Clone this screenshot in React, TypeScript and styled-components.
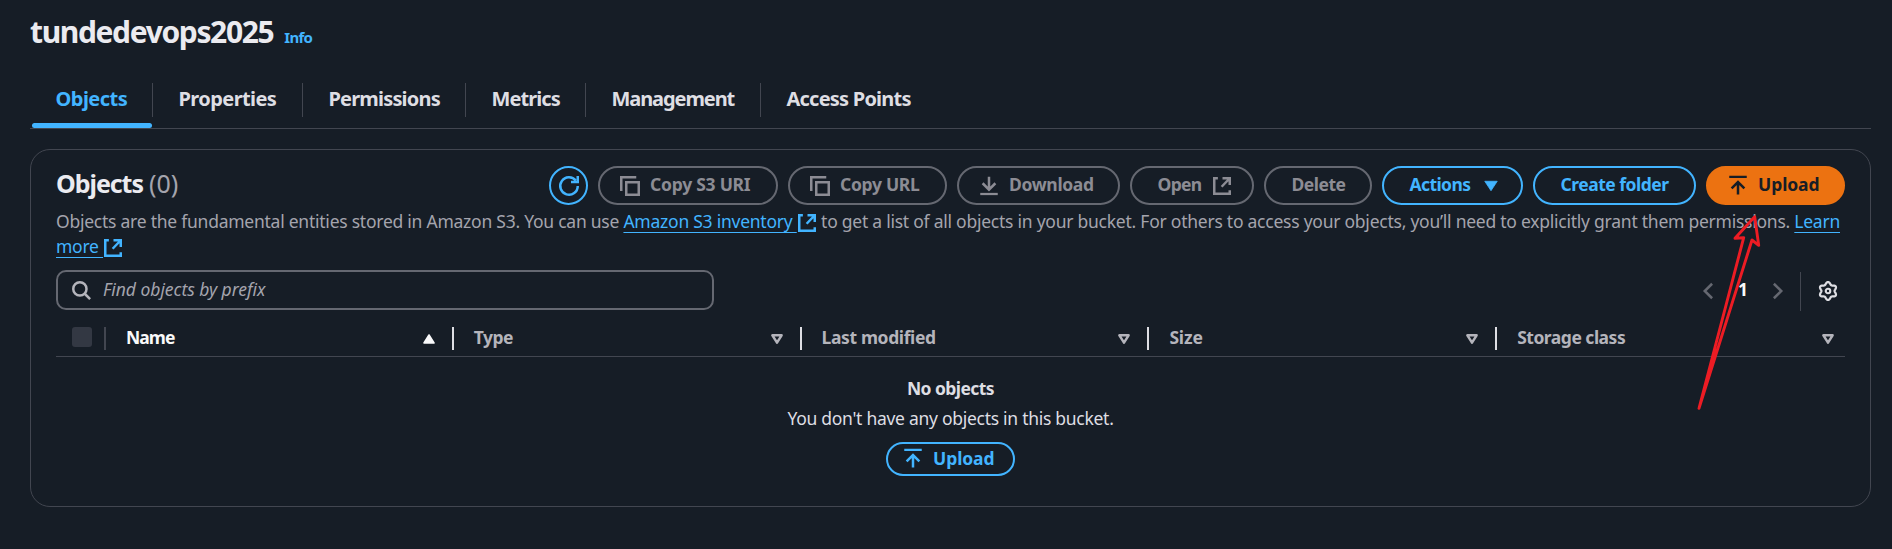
import React from 'react';
import styled, { createGlobalStyle, css } from 'styled-components';

const color = {
  page: '#161d26',
  line: '#424650',
  control: '#656871',
  disabled: '#8c8c94',
  muted: '#a4a4ad',
  column: '#b4b4bb',
  text: '#dedee3',
  heading: '#ebebf0',
  bright: '#f9f9fa',
  accent: '#42b4ff',
  primary: '#ec7211',
  onPrimary: '#161d26',
  checkbox: '#333843',
};

const GlobalStyle = createGlobalStyle`
  *, *::before, *::after { box-sizing: border-box; }
  body {
    margin: 0;
    background: ${color.page};
    color: ${color.text};
    font-family: "Noto Sans", "Open Sans", sans-serif;
    font-size: 17.5px;
    line-height: 25px;
  }
  h1, h2, p { margin: 0; }
`;

/* ---------- icons ---------- */

const IconSvg = styled.svg`
  flex: none;
  display: block;
  width: 20px;
  height: 20px;
  overflow: visible;
  fill: none;
  stroke: currentColor;
  stroke-width: 2;
`;

const lobePath = (() => {
  const pts: string[] = [];
  for (let i = 0; i < 120; i++) {
    const a = (i / 120) * Math.PI * 2;
    const r = 6.2 + 0.95 * Math.cos(6 * (a - Math.PI / 2));
    pts.push(`${(8 + r * Math.cos(a)).toFixed(2)} ${(8 - r * Math.sin(a)).toFixed(2)}`);
  }
  return `M${pts.join('L')}Z`;
})();

const icons = {
  refresh: (
    <>
      <path d="M15 8a7 7 0 1 1-1.5-4.3" />
      <path d="M9.6 4.8H15V0" />
    </>
  ),
  copy: (
    <>
      <path d="M1 12V1h12" />
      <path d="M5 5h10v10H5z" />
    </>
  ),
  download: (
    <>
      <path d="M8 .5v10.2M2.9 5.8 8 10.9l5.1-5.1" />
      <path d="M1 14.4h14" strokeWidth={1.8} />
    </>
  ),
  upload: (
    <>
      <path d="M8 14.8V4.8M2.9 9.9 8 4.8l5.1 5.1" />
      <path d="M1 .7h14" strokeWidth={1.8} />
    </>
  ),
  external: (
    <>
      <path d="M4.7 1.8H1.8v12.4h12.4v-2.9" />
      <path d="M8.4 1.8h5.8v5.4M14.2 1.8 7.7 8.6" />
    </>
  ),
  search: (
    <>
      <circle cx="7.1" cy="7.1" r="5.3" />
      <path d="m11 11 4.3 4.3" />
    </>
  ),
  prev: <path d="M11.3 2.2 5.4 8l5.9 5.8" />,
  next: <path d="M4.7 2.2 10.6 8l-5.9 5.8" />,
  settings: (
    <>
      <path d={lobePath} strokeWidth={1.8} strokeLinejoin="round" />
      <circle cx="8" cy="8" r="1.8" strokeWidth={1.7} />
    </>
  ),
  caret: <path d="M3 4.2h10l-5 7.6z" fill="currentColor" strokeWidth={0.6} strokeLinejoin="round" />,
};

type IconName = keyof typeof icons;

const Icon = ({ name, className }: { name: IconName; className?: string }) => (
  <IconSvg className={className} viewBox="0 0 16 16" aria-hidden="true">
    {icons[name]}
  </IconSvg>
);

/* ---------- page header and tabs ---------- */

const Page = styled.main`
  position: relative;
  height: 549px;
  padding: 13px 21px 0 30px;
  overflow: hidden;
`;

const TitleRow = styled.header`
  display: flex;
  align-items: baseline;
  height: 38px;
  margin-bottom: 32px;
`;

const Title = styled.h1`
  font-size: 30px;
  line-height: 38px;
  font-weight: 700;
  letter-spacing: -1.36px;
  color: ${color.heading};
`;

const InfoLink = styled.a`
  margin-left: 11px;
  font-size: 15px;
  font-weight: 700;
  letter-spacing: -0.75px;
  color: ${color.accent};
`;

const TabList = styled.nav`
  display: flex;
  height: 46px;
  border-bottom: 1px solid ${color.line};
`;

const Tab = styled.a<{ $width: number; $track: number; $active?: boolean }>`
  position: relative;
  width: ${(p) => p.$width}px;
  height: 34px;
  padding-left: 25.5px;
  border-right: 1px solid ${color.line};
  font-size: 20px;
  line-height: 32px;
  font-weight: 700;
  letter-spacing: ${(p) => p.$track}px;
  white-space: nowrap;
  color: ${(p) => (p.$active ? color.accent : color.text)};

  &:last-child { border-right: 0; }

  ${(p) =>
    p.$active &&
    css`
      &::after {
        content: '';
        position: absolute;
        left: 2px;
        right: 0;
        top: 40px;
        height: 5px;
        border-radius: 2.5px;
        background: ${color.accent};
      }
    `}
`;

/* ---------- panel ---------- */

const Panel = styled.section`
  height: 358px;
  margin-top: 20px;
  padding: 16px 25px 0;
  border: 1px solid ${color.line};
  border-radius: 20px;
`;

const PanelHeader = styled.div`
  display: flex;
  justify-content: space-between;
  height: 39px;
`;

const Heading = styled.h2`
  display: flex;
  gap: 6px;
  font-size: 25px;
  line-height: 35px;
  font-weight: 700;
  letter-spacing: -1.05px;
  color: ${color.heading};
`;

const Counter = styled.span`
  font-weight: 400;
  letter-spacing: 0;
  color: ${color.muted};
`;

const ButtonGroup = styled.div`
  display: flex;
  gap: 10px;
`;

type Variant = 'normal' | 'disabled' | 'primary';

const Button = styled.button<{ $variant: Variant; $width: number; $leadingIcon?: boolean; $small?: boolean }>`
  display: flex;
  align-items: center;
  width: ${(p) => p.$width}px;
  height: ${(p) => (p.$small ? 34 : 39)}px;
  padding: 0 20px 0 ${(p) => (p.$small ? 15 : p.$leadingIcon ? 20 : 25.5)}px;
  gap: 10px;
  border: 2px solid;
  border-radius: 20px;
  background: transparent;
  font: inherit;
  font-weight: 700;
  white-space: nowrap;
  ${(p) =>
    ({
      normal: css`
        color: ${color.accent};
        border-color: ${color.accent};
      `,
      disabled: css`
        color: ${color.disabled};
        border-color: ${color.control};
      `,
      primary: css`
        color: ${color.onPrimary};
        border-color: ${color.primary};
        background: ${color.primary};
      `,
    })[p.$variant]}
`;

const RoundButton = styled(Button)`
  justify-content: center;
  padding: 0;
`;

const Label = styled.span<{ $track: number }>`
  padding-bottom: 2px;
  letter-spacing: ${(p) => p.$track}px;
`;

const TrailingIcon = styled(Icon)`
  margin-left: auto;
`;

const Description = styled.p`
  margin-top: 4px;
  letter-spacing: -0.245px;
  color: ${color.muted};
`;

const Link = styled.a`
  color: ${color.accent};
  text-decoration: underline 1px;
  text-underline-offset: 4px;
  text-decoration-skip-ink: none;
`;

const LinkIcon = styled(Icon)`
  display: inline-block;
  vertical-align: -5px;
  color: ${color.accent};
`;

/* ---------- filter and pagination ---------- */

const Tools = styled.div`
  display: flex;
  justify-content: space-between;
  height: 40px;
  margin-top: 11px;
`;

const SearchField = styled.label`
  display: flex;
  align-items: center;
  gap: 12px;
  width: 658px;
  padding-left: 13px;
  border: 2px solid ${color.control};
  border-radius: 10px;
  color: ${color.column};
`;

const Placeholder = styled.span`
  padding-bottom: 1px;
  font-style: italic;
  letter-spacing: -0.04px;
  color: ${color.muted};
`;

const Pager = styled.div`
  display: flex;
  align-items: center;
  padding: 2px 7px 0 0;
  color: ${color.control};
`;

const PageNumber = styled.span`
  width: 50px;
  padding-bottom: 3px;
  text-align: center;
  font-weight: 700;
  color: ${color.bright};
`;

const PagerDivider = styled.span`
  width: 1px;
  height: 39px;
  margin: 0 17px 0 12px;
  background: ${color.line};
`;

const SettingsIcon = styled(Icon)`
  color: ${color.text};
`;

/* ---------- table ---------- */

const HeaderRow = styled.div`
  display: grid;
  grid-template-columns: 50px repeat(5, 1fr);
  height: 47px;
  padding-top: 17px;
  border-bottom: 1px solid ${color.line};
`;

const SelectCell = styled.div`
  height: 23px;
  padding-left: 16px;
  border-right: 2px solid ${color.line};
`;

const Checkbox = styled.div`
  width: 20px;
  height: 20px;
  border-radius: 3px;
  background: ${color.checkbox};
`;

const ColumnCell = styled.div<{ $sorted?: boolean }>`
  display: flex;
  justify-content: space-between;
  height: 23px;
  padding: 0 17px 0 20px;
  border-right: 2px solid ${color.text};
  font-weight: 700;
  color: ${(p) => (p.$sorted ? color.bright : color.column)};

  &:last-child {
    padding-right: 11px;
    border-right: 0;
  }
`;

const ColumnName = styled.span<{ $track: number }>`
  margin-top: -2px;
  letter-spacing: ${(p) => p.$track}px;
`;

const SortSvg = styled.svg`
  width: 12px;
  height: 10px;
  margin-top: 7px;
  stroke: currentColor;
  stroke-linejoin: round;
`;

const SortMark = ({ sorted }: { sorted?: boolean }) => (
  <SortSvg viewBox="0 0 12 10" aria-hidden="true">
    {sorted ? (
      <path d="M6 1 11 9H1Z" fill="currentColor" strokeWidth="1.6" />
    ) : (
      <path d="M1.4 1.3h9.2L6 8.6Z" fill="none" strokeWidth="2.5" />
    )}
  </SortSvg>
);

const EmptyState = styled.div`
  display: flex;
  flex-direction: column;
  align-items: center;
  padding-top: 19px;
`;

const EmptyTitle = styled.p`
  font-weight: 700;
  letter-spacing: -0.57px;
`;

const EmptyText = styled.p`
  margin: 5px 0 11px;
  letter-spacing: -0.28px;
`;

/* ---------- hand-drawn pointer ---------- */

const PointerSvg = styled.svg`
  position: absolute;
  left: 1690px;
  top: 210px;
  width: 76px;
  height: 204px;
  pointer-events: none;
`;

const tabs = [
  { name: 'Objects', width: 123, track: -0.52, active: true },
  { name: 'Properties', width: 150, track: -0.58 },
  { name: 'Permissions', width: 163, track: -0.82 },
  { name: 'Metrics', width: 120, track: -0.92 },
  { name: 'Management', width: 175, track: -1.08 },
  { name: 'Access Points', width: 180, track: -0.78 },
];

const actions: {
  label: string;
  width: number;
  track: number;
  variant: Variant;
  icon?: IconName;
  trailing?: IconName;
}[] = [
  { label: 'Copy S3 URI', width: 180, track: -0.25, variant: 'disabled', icon: 'copy' },
  { label: 'Copy URL', width: 159, track: -0.3, variant: 'disabled', icon: 'copy' },
  { label: 'Download', width: 163, track: -0.34, variant: 'disabled', icon: 'download' },
  { label: 'Open', width: 124, track: -0.7, variant: 'disabled', trailing: 'external' },
  { label: 'Delete', width: 108, track: -0.5, variant: 'disabled' },
  { label: 'Actions', width: 141, track: -0.6, variant: 'normal', trailing: 'caret' },
  { label: 'Create folder', width: 163, track: -0.5, variant: 'normal' },
  { label: 'Upload', width: 139, track: -0.08, variant: 'primary', icon: 'upload' },
];

const columns = [
  { name: 'Name', track: -0.95, sorted: true },
  { name: 'Type', track: -0.5 },
  { name: 'Last modified', track: -0.38 },
  { name: 'Size', track: -0.17 },
  { name: 'Storage class', track: -0.5 },
];

export default function App() {
  return (
    <>
      <GlobalStyle />
      <Page>
        <TitleRow>
          <Title>tundedevops2025</Title>
          <InfoLink>Info</InfoLink>
        </TitleRow>
        <TabList>
          {tabs.map((t) => (
            <Tab key={t.name} $width={t.width} $track={t.track} $active={t.active}>
              {t.name}
            </Tab>
          ))}
        </TabList>
        <Panel>
          <PanelHeader>
            <Heading>
              Objects <Counter>(0)</Counter>
            </Heading>
            <ButtonGroup>
              <RoundButton $variant="normal" $width={39} aria-label="Refresh">
                <Icon name="refresh" />
              </RoundButton>
              {actions.map((a) => (
                <Button key={a.label} $variant={a.variant} $width={a.width} $leadingIcon={!!a.icon}>
                  {a.icon && <Icon name={a.icon} />}
                  <Label $track={a.track}>{a.label}</Label>
                  {a.trailing && <TrailingIcon name={a.trailing} />}
                </Button>
              ))}
            </ButtonGroup>
          </PanelHeader>
          <Description>
            Objects are the fundamental entities stored in Amazon S3. You can use{' '}
            <Link>Amazon S3 inventory&nbsp;</Link>
            <LinkIcon name="external" /> to get a list of all objects in your bucket. For others to access your
            objects, you’ll need to explicitly grant them permissions. <Link>Learn more&nbsp;</Link>
            <LinkIcon name="external" />
          </Description>
          <Tools>
            <SearchField>
              <Icon name="search" />
              <Placeholder>Find objects by prefix</Placeholder>
            </SearchField>
            <Pager>
              <Icon name="prev" />
              <PageNumber>1</PageNumber>
              <Icon name="next" />
              <PagerDivider />
              <SettingsIcon name="settings" />
            </Pager>
          </Tools>
          <HeaderRow>
            <SelectCell>
              <Checkbox />
            </SelectCell>
            {columns.map((c) => (
              <ColumnCell key={c.name} $sorted={c.sorted}>
                <ColumnName $track={c.track}>{c.name}</ColumnName>
                <SortMark sorted={c.sorted} />
              </ColumnCell>
            ))}
          </HeaderRow>
          <EmptyState>
            <EmptyTitle>No objects</EmptyTitle>
            <EmptyText>You don't have any objects in this bucket.</EmptyText>
            <Button $variant="normal" $width={129} $leadingIcon $small>
              <Icon name="upload" />
              <Label $track={-0.08}>Upload</Label>
            </Button>
          </EmptyState>
        </Panel>
        <PointerSvg viewBox="1690 210 76 204" aria-hidden="true">
          <path
            d="M1699 408.3 1743.7 237.7 1735 238.3 1754.7 216.7 1758.7 245.3 1752 240Z"
            fill="none"
            stroke="#ed1c24"
            strokeWidth="2.9"
            strokeLinejoin="round"
          />
        </PointerSvg>
      </Page>
    </>
  );
}
